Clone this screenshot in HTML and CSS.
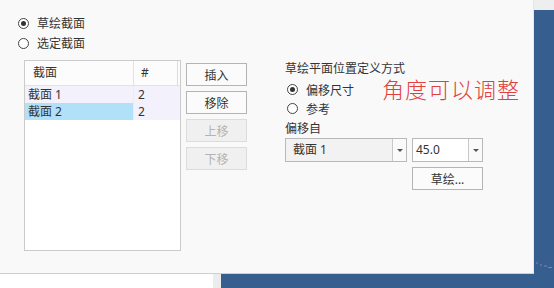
FILE: index.html
```html
<!DOCTYPE html>
<html lang="zh-CN">
<head>
    <meta charset="UTF-8">
    <title>草绘截面</title>
    <link rel="stylesheet" href="styles.css">
</head>
<body>
    <div class="desk">
        <div class="top">
            <div class="dialog">
                <div class="modes">
                    <label class="radio"><span class="dot on"></span>草绘截面</label>
                    <label class="radio"><span class="dot"></span>选定截面</label>
                </div>
                <div class="main">
                    <div class="list">
                        <div class="row head">
                            <div class="c1">截面</div>
                            <div class="c2">#</div>
                        </div>
                        <div class="row item">
                            <div class="c1">截面 1</div>
                            <div class="c2">2</div>
                        </div>
                        <div class="row item">
                            <div class="c1 sel">截面 2</div>
                            <div class="c2">2</div>
                        </div>
                    </div>
                    <div class="btns">
                        <button class="btn">插入</button>
                        <button class="btn">移除</button>
                        <button class="btn off">上移</button>
                        <button class="btn off">下移</button>
                    </div>
                    <div class="place">
                        <div class="caption">草绘平面位置定义方式</div>
                        <label class="radio"><span class="dot on"></span>偏移尺寸</label>
                        <label class="radio"><span class="dot"></span>参考</label>
                        <div class="caption from">偏移自</div>
                        <div class="combos">
                            <div class="combo ro">
                                <span class="val">截面 1</span>
                                <span class="arrow"></span>
                            </div>
                            <div class="combo num">
                                <span class="val">45.0</span>
                                <span class="arrow"></span>
                            </div>
                        </div>
                        <button class="btn sketch">草绘...</button>
                    </div>
                </div>
                <div class="note">角度可以调整</div>
            </div>
            <div class="side">
                <div class="side-cap"></div>
                <svg class="dashes" width="18" height="8" viewBox="0 0 18 8">
                    <path d="M1 1h2M5 3h2M9 4h3M13 5.5h4" stroke="#8a78c8" stroke-width="1.2"/>
                </svg>
            </div>
        </div>
        <div class="bottom">
            <div class="b-white"></div>
            <div class="b-gap"></div>
            <div class="b-blue"></div>
        </div>
    </div>
</body>
</html>
```
FILE: styles.css
```css
body {
    margin: 0;
    font-family: "Noto Sans", "Noto Sans CJK SC", sans-serif;
    font-size: 12px;
    color: #333;
    background-color: #fff;
}

.desk {
    width: 554px;
    height: 288px;
    overflow: hidden;
}

.top {
    display: flex;
    height: 274px;
}

.dialog {
    position: relative;
    width: 533px;
    height: 273px;
    background-color: #f9f9f9;
    border-bottom: 1px solid #cfcfcf;
    border-right: 1px solid #e6e6e6;
}

.side {
    flex: 1;
    display: flex;
    flex-direction: column;
    background-color: #365e8e;
}

.side-cap {
    height: 10px;
    background-color: #eeeeee;
}

.dashes {
    margin-top: auto;
    margin-bottom: 4px;
    margin-left: 1px;
}

.bottom {
    display: flex;
    height: 14px;
}

.b-white {
    width: 213px;
    background-color: #fff;
}

.b-gap {
    width: 8px;
    background-color: #ececec;
}

.b-blue {
    flex: 1;
    background-color: #365e8e;
}

/* radios */
.modes {
    padding: 13px 0 0 18px;
}

.radio {
    display: flex;
    align-items: center;
    height: 20px;
    gap: 8px;
}

.dot {
    box-sizing: border-box;
    width: 11px;
    height: 11px;
    border: 1px solid #444;
    border-radius: 50%;
    background-color: #fff;
    display: flex;
    align-items: center;
    justify-content: center;
}

.dot.on::after {
    content: "";
    width: 5px;
    height: 5px;
    border-radius: 50%;
    background-color: #333;
}

/* list + buttons + right panel */
.main {
    display: flex;
    align-items: flex-start;
    margin-top: 7px;
    padding-left: 24px;
}

.list {
    box-sizing: border-box;
    width: 157px;
    height: 191px;
    background-color: #fff;
    border: 1px solid #cbcbcb;
}

.row {
    display: flex;
    height: 17px;
    line-height: 17px;
}

.row .c1 {
    width: 105px;
    padding-left: 3px;
    border-right: 1px solid #ececec;
}

.row .c2 {
    width: 40px;
    padding-left: 4px;
}

.row.head {
    height: 24px;
    line-height: 24px;
    border-bottom: 1px solid #e2e2e2;
    background-color: #fcfcfc;
}

.row.head .c1 {
    width: 100px;
    padding-left: 8px;
    border-right: 1px solid #e2e2e2;
}

.row.head .c2 {
    width: 36px;
    padding-left: 7px;
    border-right: 1px solid #dcdcdc;
}

.row.item {
    background-color: #f3f1fb;
}

.row .c1.sel {
    background-color: #b1e1f8;
}

.btns {
    display: flex;
    flex-direction: column;
    gap: 5px;
    margin: 3px 0 0 5px;
}

.btn {
    box-sizing: border-box;
    width: 61px;
    height: 23px;
    padding: 0;
    font-family: inherit;
    font-size: 12px;
    color: #333;
    background-color: #fbfbfb;
    border: 1px solid #b4b4b4;
}

.btn.off {
    color: #b3b3b3;
    background-color: #f0f0f0;
    border-color: #dcdcdc;
}

.place {
    margin: 1px 0 0 38px;
}

.caption {
    height: 16px;
    line-height: 16px;
    margin-bottom: 3px;
}

.place .radio {
    height: 19px;
    padding-left: 2px;
}

.caption.from {
    margin: 3px 0 1px;
}

.combos {
    display: flex;
    gap: 5px;
}

.combo {
    box-sizing: border-box;
    display: flex;
    height: 24px;
    border: 1px solid #b9b9b9;
    background-color: #fff;
}

.combo .val {
    flex: 1;
    line-height: 22px;
    padding-left: 3px;
}

.combo.ro {
    width: 122px;
    background-color: #f2f2f2;
}

.combo.ro .val {
    padding-left: 7px;
}

.combo.num {
    width: 71px;
}

.arrow {
    width: 13px;
    border-left: 1px solid #c8c8c8;
    display: flex;
    align-items: center;
    justify-content: center;
    background-color: #fafafa;
}

.arrow::after {
    content: "";
    border-left: 3px solid transparent;
    border-right: 3px solid transparent;
    border-top: 3px solid #555;
}

.btn.sketch {
    display: block;
    width: 71px;
    margin: 5px 0 0 127px;
}

.note {
    position: absolute;
    left: 382px;
    top: 73px;
    font-family: "Noto Sans CJK SC", sans-serif;
    font-size: 22px;
    font-weight: 300;
    line-height: 30px;
    letter-spacing: 1px;
    color: #e2403c;
}
```
